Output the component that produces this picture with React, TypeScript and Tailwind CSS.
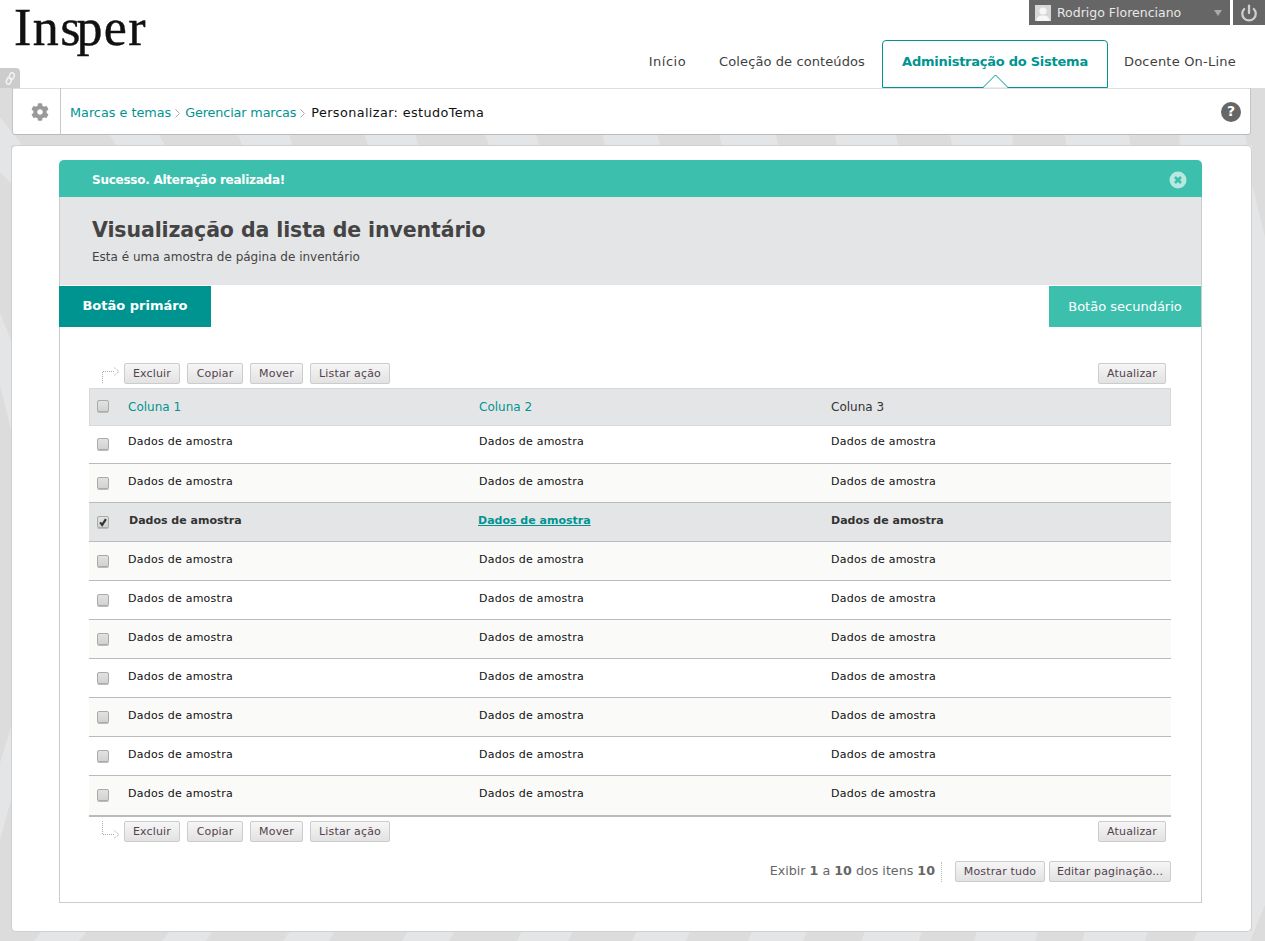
import { FaCog } from 'react-icons/fa';
import { Power } from 'lucide-react';

const font = { fontFamily: '"DejaVu Sans", Verdana, sans-serif' };

// light rays of the page background, as seen in the gutters
const backdrop = [
  '109,134 116,145 165,145 158,134',
  '238,134 242,145 292,145 289,134',
  '364,134 368,145 418,145 415,134',
  '485,134 489,145 539,145 536,134',
  '602,134 605,145 660,145 657,134',
  '719,134 722,145 778,145 776,134',
  '835,134 837,145 898,145 896,134',
  '950,134 952,145 1013,145 1012,134',
  '1065,134 1066,145 1130,145 1129,134',
  '1179,134 1180,145 1247,145 1245,134',
  '1240,134 1265,237 1265,905 1250,941 1193,941 1198,931 1252,931 1252,145 1240,145',
  '0,117 22,145 11,145 11,183 0,173',
  '0,313 11,340 11,430 0,385',
  '0,763 11,727 11,800 0,840',
  '34,941 42,931 87,931 79,941',
  '162,941 170,931 213,931 206,941',
  '283,941 290,931 335,931 329,941',
  '402,941 408,931 455,931 449,941',
  '517,941 522,931 573,931 568,941',
  '632,941 637,931 690,931 686,941',
  '748,941 752,931 807,931 803,941',
  '861,941 865,931 922,931 919,941',
  '974,941 977,931 1038,931 1035,941',
  '1082,941 1085,931 1148,931 1145,941',
];

const rows = [
  { top: 'h-[38px]', bg: 'bg-white', boxMt: 'mt-[12px]', textMt: 'mt-[8px]' },
  { top: 'h-[39px]', bg: 'bg-[#fafaf8]', boxMt: 'mt-[13px]', textMt: 'mt-[10px]' },
  { top: 'h-[39px]', bg: 'bg-[#e4e5e7]', boxMt: 'mt-[13px]', textMt: 'mt-[10px]', selected: true },
  { top: 'h-[39px]', bg: 'bg-[#fafaf8]', boxMt: 'mt-[13px]', textMt: 'mt-[10px]' },
  { top: 'h-[39px]', bg: 'bg-white', boxMt: 'mt-[13px]', textMt: 'mt-[10px]' },
  { top: 'h-[39px]', bg: 'bg-[#fafaf8]', boxMt: 'mt-[13px]', textMt: 'mt-[10px]' },
  { top: 'h-[39px]', bg: 'bg-white', boxMt: 'mt-[13px]', textMt: 'mt-[10px]' },
  { top: 'h-[39px]', bg: 'bg-[#fafaf8]', boxMt: 'mt-[13px]', textMt: 'mt-[10px]' },
  { top: 'h-[39px]', bg: 'bg-white', boxMt: 'mt-[13px]', textMt: 'mt-[10px]' },
  { top: 'h-[39px]', bg: 'bg-[#fafaf8]', boxMt: 'mt-[13px]', textMt: 'mt-[10px]' },
];

const Box = ({ checked = false }: { checked?: boolean }) => (
  <span className="relative block h-[12px] w-[12px] rounded-[2px] border border-[#aaaaaa] bg-gradient-to-b from-[#e2e2e2] to-[#d2d2d2] shadow-[0_1px_0_#bbbbbb]">
    {checked && (
      <svg viewBox="0 0 12 12" className="absolute left-[0px] top-[0px] h-[10px] w-[10px]">
        <path d="M2.5 6.5 L5 9.5 L9.5 2.5" fill="none" stroke="#333333" strokeWidth="2.6" />
      </svg>
    )}
  </span>
);

const Btn = ({ label, width }: { label: string; width: string }) => (
  <button
    type="button"
    className={`h-[21px] whitespace-nowrap rounded-[2px] border border-[#cccccc] bg-gradient-to-b from-[#f6f6f6] to-[#e2e2e2] pt-px text-center text-[11px] leading-[18px] tracking-[0.15px] text-[#54424f] ${width}`}
  >
    {label}
  </button>
);

const Chevron = () => (
  <svg width="5" height="9" viewBox="0 0 5 9" className="mx-[4px] mt-[1px] shrink-0" fill="none">
    <path d="M0.5 0.5 L4.5 4.5 L0.5 8.5" stroke="#aaaaaa" />
  </svg>
);

const ActionBar = ({ flip = false }: { flip?: boolean }) => (
  <div className={`flex h-[21px] items-center pl-[13px] pr-[5px] ${flip ? 'mt-[4px]' : ''}`}>
    <svg width="22" height="21" viewBox="0 0 22 21" className="shrink-0" fill="none">
      {flip ? (
        <path d="M0.5 0 V13.5 H13 M12 9.5 L17 13.5 L12 17.5" stroke="#aaaaaa" strokeDasharray="1 1" />
      ) : (
        <path d="M0.5 24 V8.5 H13 M12 4.5 L17 8.5 L12 12.5" stroke="#aaaaaa" strokeDasharray="1 1" />
      )}
    </svg>
    <div className="flex gap-[7px]">
      <Btn label="Excluir" width="w-[56px]" />
      <Btn label="Copiar" width="w-[56px]" />
      <Btn label="Mover" width="w-[53px]" />
      <Btn label="Listar ação" width="w-[80px]" />
    </div>
    <div className="ml-auto flex">
      <Btn label="Atualizar" width="w-[68px]" />
    </div>
  </div>
);

export default function App() {
  return (
    <div className="relative h-[941px] w-[1265px] overflow-hidden bg-[#dcdcdc]" style={font}>
      <svg className="absolute inset-0" width="1265" height="941" viewBox="0 0 1265 941">
        {backdrop.map((points) => (
          <polygon key={points} points={points} fill="#e4e5e7" />
        ))}
      </svg>

      <div className="relative flex flex-col">
        {/* Header */}
        <header className="relative h-[88px] bg-white">
          <div
            className="absolute left-[14px] top-[8px] text-[52px] leading-[40px] tracking-[1.4px] text-[#111111] [-webkit-text-stroke:0.4px_#111111]"
            style={{ fontFamily: '"Liberation Serif", serif' }}
          >
            In<span className="tracking-[-4px]">s</span>per
          </div>

          <div className="absolute left-0 top-[68px] flex h-[20px] w-[20px] items-center justify-center rounded-tr-[4px] bg-[#cccccc]">
            <svg width="11" height="13" viewBox="0 0 11 13" fill="none" stroke="#f2f2f2" strokeWidth="1.6">
              <rect x="4.6" y="0.8" width="4.4" height="6.6" rx="2.2" transform="rotate(18 7 4)" />
              <rect x="1.6" y="5.6" width="4.4" height="6.6" rx="2.2" transform="rotate(18 4 9)" />
            </svg>
          </div>

          <div className="absolute right-0 top-0 flex h-[25px] gap-[3px]">
            <div className="flex w-[201px] items-center bg-[#666666] pl-[6px] pr-[8px] text-[12.5px] text-[#e8e8e8]">
              <svg width="16" height="16" viewBox="0 0 16 16" className="mr-[6px] shrink-0">
                <rect width="16" height="16" fill="#d8d8d8" />
                <circle cx="8" cy="6" r="3.6" fill="#f6f6f6" />
                <path d="M1.5 16 C2 11 5 10.5 8 10.5 C11 10.5 14 11 14.5 16 Z" fill="#f6f6f6" />
              </svg>
              <span className="whitespace-nowrap pt-[1px]">Rodrigo Florenciano</span>
              <span className="ml-auto h-0 w-0 border-x-[4.5px] border-t-[6px] border-x-transparent border-t-[#aaaaaa]" />
            </div>
            <div className="flex w-[32px] items-center justify-center bg-[#666666]">
              <Power size={18} strokeWidth={3} className="text-[#cfcfcf]" />
            </div>
          </div>

          <nav className="absolute right-[26px] top-[40px] flex h-[48px] items-center text-[13px] tracking-[0.1px] text-[#3f3f3f]">
            <span className="-mt-[5px] px-[17px] tracking-[0.5px]">Início</span>
            <span className="-mt-[5px] px-[16px]">Coleção de conteúdos</span>
            <span className="relative mx-[1px] flex h-[48px] w-[226px] items-center justify-center rounded-t-[4px] border border-[#009490] bg-white pb-[5px] font-bold tracking-[-0.25px] text-[#009490]">
              Administração do Sistema
              <svg width="26" height="14" viewBox="0 0 26 14" className="absolute bottom-[-1px] left-[100px]">
                <path d="M0 13.5 L12.5 1 L25 13.5" fill="white" stroke="#009490" />
                <path d="M1 14 H24" stroke="white" strokeWidth="1.5" />
              </svg>
            </span>
            <span className="-mt-[5px] w-[130px] whitespace-nowrap pl-[15px] tracking-[0.2px]">Docente On-Line</span>
          </nav>
        </header>

        {/* Breadcrumb */}
        <div className="ml-[12px] flex h-[47px] w-[1239px] items-center rounded-b-[3px] border border-t-0 border-[#c4c4c4] border-b-[#bbbbbb] bg-white text-[12.8px] shadow-[inset_0_1px_0_#dddddd]">
          <div className="flex h-full w-[48px] shrink-0 items-center justify-center border-r border-[#c8c8c8] pl-[6px] pt-[2px]">
            <FaCog size={18} className="text-[#999999]" />
          </div>
          <div className="flex items-center pt-[3px]">
            <span className="ml-[9px] text-[#009490]">Marcas e temas</span>
            <Chevron />
            <span className="ml-[1px] tracking-[-0.15px] text-[#009490]">Gerenciar marcas</span>
            <Chevron />
            <span className="ml-[2px] tracking-[0.4px] text-[#111111]">Personalizar: estudoTema</span>
          </div>
          <span className="ml-auto mr-[9px] mt-[1px] flex h-[20px] w-[20px] items-center justify-center rounded-full bg-[#666666] text-[14px] font-bold text-white">
            ?
          </span>
        </div>

        {/* Content card */}
        <main className="ml-[11px] mt-[10px] h-[787px] w-[1241px] rounded-[5px] border border-[#d0d0d0] bg-white pl-[47px] pr-[49px] pt-[14px]">
          <section className="flex h-[743px] flex-col rounded-t-[5px] border border-t-0 border-[#cccccc]">
            <div className="-mx-px flex h-[37px] items-center justify-between rounded-t-[5px] bg-[#3dbfae] pl-[33px] pr-[15px] text-[12px] font-bold tracking-[-0.25px] text-white">
              <span className="pt-[2px]">Sucesso. Alteração realizada!</span>
              <svg width="18" height="18" viewBox="0 0 18 18" className="mt-[2px]">
                <circle cx="9" cy="9" r="8.5" fill="#b8e8e0" />
                <path d="M6 6 L12 12 M12 6 L6 12" stroke="#3dbfae" strokeWidth="2.6" />
              </svg>
            </div>

            <div className="h-[88px] bg-[#e4e5e7] pl-[32px] pt-[20px]">
              <h1 className="text-[20.5px] font-bold leading-[26px] tracking-[-0.1px] text-[#444444]">
                Visualização da lista de inventário
              </h1>
              <p className="mt-[7px] text-[12px] leading-[14px] text-[#444444]">
                Esta é uma amostra de página de inventário
              </p>
            </div>

            <div className="mt-px flex h-[41px] justify-between">
              <button
                type="button"
                className="-ml-px flex w-[152px] items-center justify-center bg-[#009490] pb-[2px] text-[13px] font-bold text-white"
              >
                Botão primáro
              </button>
              <button
                type="button"
                className="flex w-[152px] items-center justify-center bg-[#3dbfae] text-[13px] text-white"
              >
                Botão secundário
              </button>
            </div>

            <div className="mt-[36px] flex flex-col pl-[29px] pr-[30px]">
              <ActionBar />

              <div className="mt-[4px] grid h-[38px] grid-cols-[38px_351px_352px_1fr] items-center border border-[#d8d8d8] bg-[#e4e5e7] pb-[1px] text-[12px]">
                <span className="-mt-[1px] pl-[7px]">
                  <Box />
                </span>
                <span className="text-[#009490]">Coluna 1</span>
                <span className="text-[#009490]">Coluna 2</span>
                <span className="text-[#333333]">Coluna 3</span>
              </div>

              <div className="flex flex-col border-b-2 border-[#bbbbbb]">
                {rows.map((row, i) => (
                  <div
                    key={i}
                    className={`grid grid-cols-[39px_351px_352px_1fr] border-[#bbbbbb] text-[11px] ${row.top} ${row.bg} ${
                      i < rows.length - 1 ? 'border-b' : ''
                    } ${row.selected ? 'font-bold text-[#333333]' : 'tracking-[0.25px] text-[#111111]'}`}
                  >
                    <span className={`pl-[8px] ${row.boxMt}`}>
                      <Box checked={row.selected} />
                    </span>
                    <span className={`${row.textMt} ${row.selected ? 'pl-px' : ''}`}>Dados de amostra</span>
                    <span className={`${row.textMt} ${row.selected ? '-ml-px text-[#009490] underline' : ''}`}>
                      Dados de amostra
                    </span>
                    <span className={row.textMt}>Dados de amostra</span>
                  </div>
                ))}
              </div>

              <ActionBar flip />

              <div className="mt-[19px] flex h-[21px] items-center justify-end text-[12.7px] text-[#666666]">
                <span className="-mt-[1px]">
                  Exibir <b>1</b> a <b>10</b> dos itens <b>10</b>
                </span>
                <span className="ml-[6px] mr-[13px] h-[20px] border-l border-dotted border-[#bbbbbb]" />
                <div className="flex gap-[4px]">
                  <Btn label="Mostrar tudo" width="w-[90px]" />
                  <Btn label="Editar paginação..." width="w-[122px]" />
                </div>
              </div>
            </div>
          </section>
        </main>
      </div>
    </div>
  );
}
